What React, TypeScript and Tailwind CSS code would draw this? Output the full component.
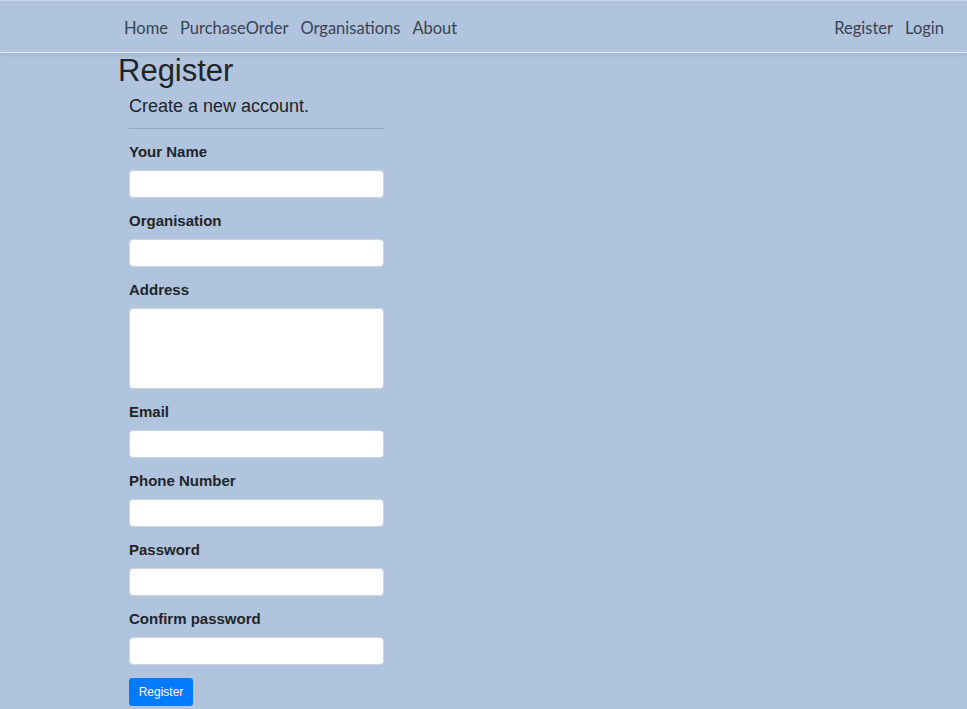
import React from "react";

const navFont = { fontFamily: "Lato, 'Open Sans', sans-serif" };

type FieldProps = {
  label: string;
  type?: string;
  multiline?: boolean;
};

const Field: React.FC<FieldProps> = ({ label, type = "text", multiline }) => {
  return (
    <div className="flex flex-col">
      <label className="text-[15px] font-bold leading-[22px] text-[#212529] mt-[1px] mb-[7px]">
        {label}
      </label>
      {multiline ? (
        <textarea className="block w-[255px] h-[81px] bg-white border border-[#ced4da] rounded-[4px] resize-none outline-none" />
      ) : (
        <input
          type={type}
          className="block w-[255px] h-[28px] bg-white border border-[#ced4da] rounded-[4px] outline-none"
        />
      )}
    </div>
  );
};

const App: React.FC = () => {
  return (
    <div
      className="min-h-[709px] bg-[#b0c4de] text-[#212529]"
      style={{ fontFamily: "'Liberation Sans', Arial, sans-serif" }}
    >
      <nav
        className="h-[53px] pt-[3px] border-t border-[#c8d6e8] border-b border-b-[#e6edf6] shadow-[0_2px_4px_rgba(0,0,0,0.08)] flex items-center justify-between pl-[124px] pr-[23px] text-[16.5px] text-[#3a4350]"
        style={navFont}
      >
        <div className="flex gap-[12px]">
          <a>Home</a>
          <a>PurchaseOrder</a>
          <a>Organisations</a>
          <a>About</a>
        </div>
        <div className="flex gap-[12px]">
          <a>Register</a>
          <a>Login</a>
        </div>
      </nav>
      <main className="pl-[118px]">
        <h1 className="text-[31px] leading-[36px]">Register</h1>
        <div className="pl-[11px]">
          <h4 className="text-[18px] leading-[24px] mt-[5px]">Create a new account.</h4>
          <hr className="w-[255px] mt-[10px] border-t border-[#94a9c4]" />
          <div className="mt-[11px] flex flex-col gap-[11px]">
            <Field label="Your Name" />
            <Field label="Organisation" />
            <Field label="Address" multiline />
            <Field label="Email" type="email" />
            <Field label="Phone Number" />
            <Field label="Password" type="password" />
            <Field label="Confirm password" type="password" />
          </div>
          <button className="mt-[13px] w-[64px] h-[28px] bg-[#007bff] text-white text-[12px] rounded-[3px]">
            Register
          </button>
        </div>
      </main>
    </div>
  );
};

export default App;
